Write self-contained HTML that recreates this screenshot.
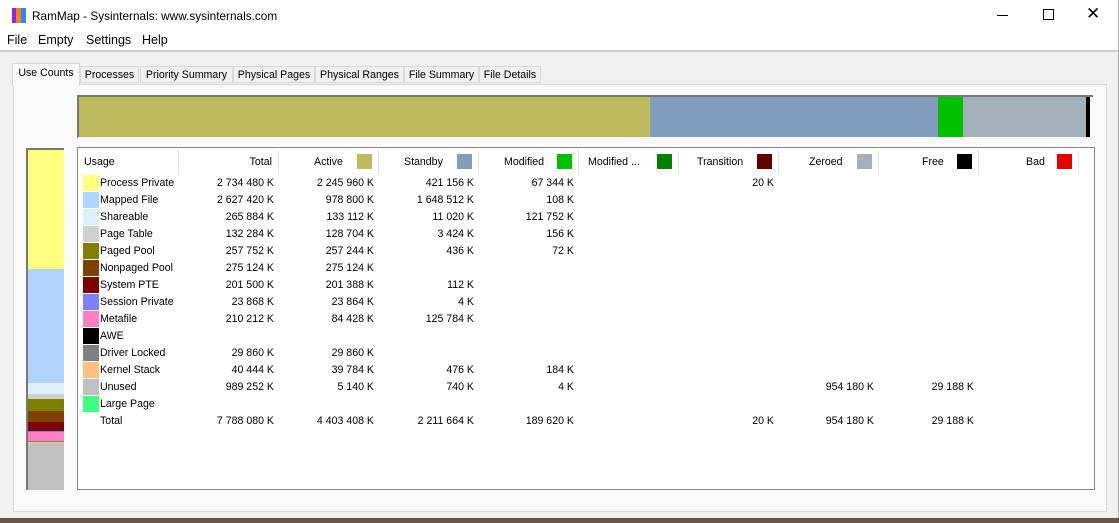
<!DOCTYPE html>
<html><head><style>
body{margin:0;width:1119px;height:523px;overflow:hidden;background:#6a5642;font-family:"Liberation Sans",sans-serif;font-size:10.6px;color:#000;position:relative}
.win{position:absolute;left:0;top:0;width:1118px;height:518px;background:#f0f0f0;border-right:1px solid #aaa}
.title{position:absolute;left:0;top:0;width:1118px;height:30px;background:#fff}
.menu{position:absolute;left:0;top:30px;width:1118px;height:20px;background:#fff;border-bottom:2px solid #ccc}
.menu span{position:absolute;top:3px;font-size:12.5px}
.tab{position:absolute;top:66px;height:17px;border:1px solid #d9d9d9;background:#f0f0f0;font-size:10.6px;line-height:17px;text-align:center;box-sizing:border-box}
.panel{position:absolute;left:13px;top:84px;width:1092px;height:426px;background:#fafafa;border:1px solid #d9d9d9}
.a{position:absolute;white-space:nowrap}
.r{position:absolute;white-space:nowrap;text-align:right}
.sw{position:absolute;width:15px;height:15px}
.sep{position:absolute;top:150px;width:1px;height:24px;background:#e5e5e5}
</style></head><body>
<div class="win">
<div class="title">
<div class="a" style="left:12px;top:8px;width:4px;height:15px;background:#8a2be2"></div>
<div class="a" style="left:16px;top:8px;width:5px;height:15px;background:#f08020"></div>
<div class="a" style="left:21px;top:8px;width:5px;height:15px;background:#2a8af0"></div>
<div class="a" style="left:32px;top:9px;font-size:11.8px">RamMap - Sysinternals: www.sysinternals.com</div>
<div class="a" style="left:997px;top:15px;width:11px;height:1px;background:#000"></div>
<div class="a" style="left:1043px;top:9px;width:9px;height:9px;border:1px solid #000"></div>
<div class="a" style="left:1086px;top:4px;font-size:17px">✕</div>
</div>
<div class="menu"><span style="left:7px">File</span><span style="left:38px">Empty</span><span style="left:86px">Settings</span><span style="left:142px">Help</span></div>
<div class="panel"></div>
<div class="tab" style="left:80px;width:59px">Processes</div>
<div class="tab" style="left:140px;width:93px">Priority Summary</div>
<div class="tab" style="left:233px;width:82px">Physical Pages</div>
<div class="tab" style="left:315px;width:89px">Physical Ranges</div>
<div class="tab" style="left:404px;width:75px">File Summary</div>
<div class="tab" style="left:479px;width:62px">File Details</div>
<div class="a" style="left:12px;top:63px;width:66px;height:22px;background:#fafafa;border:1px solid #d9d9d9;border-bottom:none;text-align:center;line-height:19px">Use Counts</div>
<!-- top bar -->
<div class="a" style="left:77px;top:95px;width:1014px;height:40px;border-top:2px solid #777;border-left:2px solid #777;border-bottom:1px solid #fff;display:flex">
<div style="width:571px;background:#bebb5f"></div><div style="width:288px;background:#839ebd"></div><div style="width:25px;background:#00c000"></div><div style="width:123px;background:#a5afba"></div><div style="width:4px;background:#000"></div></div>
<!-- left bar -->
<div class="a" style="left:26px;top:148px;width:36px;height:340px;border-top:2px solid #777;border-left:2px solid #777;background:#c0c0c0">
<div class="a" style="left:0;top:0;width:36px;height:119px;background:#ffff80"></div>
<div class="a" style="left:0;top:119px;width:36px;height:114px;background:#b0d4ff"></div>
<div class="a" style="left:0;top:233px;width:36px;height:11px;background:#ddeeff"></div>
<div class="a" style="left:0;top:244px;width:36px;height:5px;background:#d0d0d0"></div>
<div class="a" style="left:0;top:249px;width:36px;height:12px;background:#808000"></div>
<div class="a" style="left:0;top:261px;width:36px;height:11px;background:#804000"></div>
<div class="a" style="left:0;top:272px;width:36px;height:9px;background:#800000"></div>
<div class="a" style="left:0;top:281px;width:36px;height:1px;background:#8080ff"></div>
<div class="a" style="left:0;top:282px;width:36px;height:9px;background:#ff80c0"></div>
<div class="a" style="left:0;top:291px;width:36px;height:1px;background:#808080"></div>
<div class="a" style="left:0;top:292px;width:36px;height:1px;background:#ffc080"></div>
</div>
<!-- table -->
<div class="a" style="left:77px;top:147px;width:1016px;height:341px;background:#fff;border:1px solid #888"></div>
<div class="sep" style="left:178px"></div><div class="sep" style="left:278px"></div><div class="sep" style="left:378px"></div><div class="sep" style="left:478px"></div><div class="sep" style="left:578px"></div><div class="sep" style="left:678px"></div><div class="sep" style="left:778px"></div><div class="sep" style="left:878px"></div><div class="sep" style="left:978px"></div><div class="sep" style="left:1078px"></div>
<div class="a" style="left:84px;top:156px">Usage</div>
<div class="r" style="left:202px;width:70px;top:156px">Total</div>
<div class="a" style="left:314px;top:156px">Active</div><div class="sw" style="left:357px;top:154px;background:#bebb5f"></div>
<div class="a" style="left:404px;top:156px">Standby</div><div class="sw" style="left:457px;top:154px;background:#839ebd"></div>
<div class="a" style="left:504px;top:156px">Modified</div><div class="sw" style="left:557px;top:154px;background:#00c000"></div>
<div class="a" style="left:588px;top:156px">Modified ...</div><div class="sw" style="left:657px;top:154px;background:#008000"></div>
<div class="a" style="left:697px;top:156px">Transition</div><div class="sw" style="left:757px;top:154px;background:#600000"></div>
<div class="a" style="left:809px;top:156px">Zeroed</div><div class="sw" style="left:857px;top:154px;background:#a5afba"></div>
<div class="a" style="left:922px;top:156px">Free</div><div class="sw" style="left:957px;top:154px;background:#000"></div>
<div class="a" style="left:1026px;top:156px">Bad</div><div class="sw" style="left:1057px;top:154px;background:#e00000"></div>
<div id="rows"></div>
</div>
<script>
var rows=[
["#ffff80","Process Private","2 734 480 K","2 245 960 K","421 156 K","67 344 K","","20 K","","",""],
["#b0d4ff","Mapped File","2 627 420 K","978 800 K","1 648 512 K","108 K","","","","",""],
["#ddeeff","Shareable","265 884 K","133 112 K","11 020 K","121 752 K","","","","",""],
["#d0d0d0","Page Table","132 284 K","128 704 K","3 424 K","156 K","","","","",""],
["#808000","Paged Pool","257 752 K","257 244 K","436 K","72 K","","","","",""],
["#804000","Nonpaged Pool","275 124 K","275 124 K","","","","","","",""],
["#800000","System PTE","201 500 K","201 388 K","112 K","","","","","",""],
["#8080ff","Session Private","23 868 K","23 864 K","4 K","","","","","",""],
["#ff80c0","Metafile","210 212 K","84 428 K","125 784 K","","","","","",""],
["#000000","AWE","","","","","","","","",""],
["#808080","Driver Locked","29 860 K","29 860 K","","","","","","",""],
["#ffc080","Kernel Stack","40 444 K","39 784 K","476 K","184 K","","","","",""],
["#c0c0c0","Unused","989 252 K","5 140 K","740 K","4 K","","","954 180 K","29 188 K",""],
["#40ff80","Large Page","","","","","","","","",""],
["","Total","7 788 080 K","4 403 408 K","2 211 664 K","189 620 K","","20 K","954 180 K","29 188 K",""]];
var h="";
rows.forEach(function(r,i){var y=176+i*17;
if(r[0])h+='<div class="sw" style="left:83px;top:'+(y-1)+'px;width:16px;height:16px;background:'+r[0]+'"></div>';
h+='<div class="a" style="left:100px;top:'+(y+1)+'px">'+r[1]+'</div>';
for(var c=2;c<11;c++){if(r[c])h+='<div class="r" style="left:'+(174+(c-2)*100)+'px;width:100px;top:'+(y+1)+'px">'+r[c]+'</div>';}
});
document.getElementById("rows").innerHTML=h;
</script>
</body></html>
